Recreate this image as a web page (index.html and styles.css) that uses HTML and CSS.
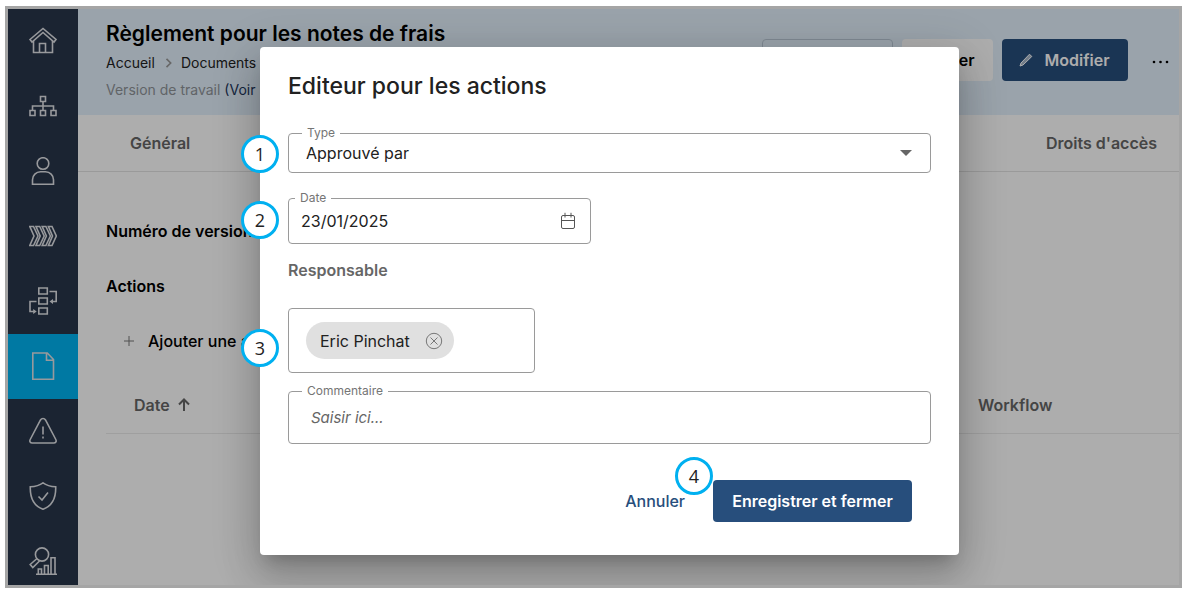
FILE: index.html
```html
<!DOCTYPE html>
<html lang="fr">
<head>
<meta charset="utf-8">
<title>Règlement pour les notes de frais</title>
<link rel="stylesheet" href="styles.css">
</head>
<body>
<div class="app">
  <nav class="sidebar" aria-label="Navigation principale">
    <a class="nav-item" href="#" aria-label="Accueil"><svg viewBox="0 0 28 28"><path d="M1 12.500 14 1.500 27 12.500 25 15 14 5.500 3 15Z"/><path d="M4.500 14v11.500h19V14M10.500 25.500v-9h6v9"/></svg></a>
    <a class="nav-item" href="#" aria-label="Organisation"><svg viewBox="0 0 28 28"><path d="M11.500 4.500h5v5h-5zM1 18.500h5v5H1zM11.500 18.500h5v5h-5zM22 18.500h5v5h-5zM14 9.500v9M3.500 18.500V14h21v4.500"/></svg></a>
    <a class="nav-item" href="#" aria-label="Personnes"><svg viewBox="0 0 28 28"><circle cx="14" cy="6.500" r="5.800"/><path d="M3.500 27.300v-4.500a8 8 0 0 1 8-8h5a8 8 0 0 1 8 8v4.500z"/></svg></a>
    <a class="nav-item" href="#" aria-label="Processus"><svg viewBox="0 0 28 28"><path d="M.8 4.500h3.700L9 14 4.500 23.500H.8L5 14zM7 4.500h3.700L15.200 14l-4.500 9.500H7L11.200 14zM13.200 4.500h3.700L21.400 14l-4.500 9.500h-3.700L17.400 14zM19.400 4.500H23L27.300 14 23 23.500h-3.600L23.500 14z"/></svg></a>
    <a class="nav-item" href="#" aria-label="Flux"><svg viewBox="0 0 28 28"><path d="M9.800 1h8.500v6H9.800zM9.800 11h8.500v6H9.800zM9.800 21h8.500v6H9.800zM20.500 4.500h6.700v10h-4.500M7.500 14.500H1v10h4.500"/><path d="m20.500 14.500 3.500-2.500v5zM7.700 24.500 4.200 22v5z" class="solid"/></svg></a>
    <a class="nav-item active" href="#" aria-label="Documents" aria-current="page"><svg viewBox="0 0 28 28"><path d="M3.800 1h14.500l6.200 6.500V27.200H3.800zM17.500 1v7.200h7"/></svg></a>
    <a class="nav-item" href="#" aria-label="Risques"><svg viewBox="0 0 28 28"><path d="M11.500 3a2.900 2.900 0 0 1 5 0l10.300 19.500c1 2-.2 3.500-2 3.500H3.200c-1.800 0-3-1.500-2-3.500zM14 9.500v8"/><path d="M14 19.500v2"/></svg></a>
    <a class="nav-item" href="#" aria-label="Contrôles"><svg viewBox="0 0 28 28"><path d="M14 .8c3 2.200 8 3.700 12.700 4C27 14.500 24 23.500 14 27.200 4 23.500 1 14.500 1.300 4.800 6 4.500 11 3 14 .8z"/><path d="m9.500 14.500 3.500 3.500 6-7.500"/></svg></a>
    <a class="nav-item" href="#" aria-label="Analyses"><svg viewBox="0 0 28 28"><circle cx="13" cy="7.500" r="6.600"/><path d="m8 11.500-6.800 6 2.600 3L10.500 14M7 27.200h21M9.300 27v-5h3.200v5M15.500 27v-8.500h3.700V27M22 27V10.700h4V27"/></svg></a>
  </nav>

  <main class="main">
    <header class="page-header">
      <div class="heading">
        <h1 class="page-title">Règlement pour les notes de frais</h1>
        <div class="crumbs">
          <a href="#">Accueil</a>
          <svg class="chevron" viewBox="0 0 8 12"><path d="m1 1 5 5-5 5"/></svg>
          <a href="#">Documents</a>
        </div>
        <div class="version">Version de travail <a href="#">(Voir</a></div>
      </div>
      <div class="header-actions">
        <button class="btn btn-outline" type="button" aria-label="Exporter"></button>
        <button class="btn btn-light" type="button">Publier</button>
        <button class="btn btn-primary btn-edit" type="button"><svg class="pencil" viewBox="0 0 14 14"><path d="M1 13 2 10 10.500 1.200 12.800 3.500 4 12z"/></svg>Modifier</button>
        <button class="btn-more" type="button" aria-label="Plus d'options"><svg viewBox="0 0 17 4"><circle cx="2" cy="2" r="1.300"/><circle cx="8.500" cy="2" r="1.300"/><circle cx="15" cy="2" r="1.300"/></svg></button>
      </div>
    </header>
    <div class="tabs">
      <a class="tab" href="#">Général</a>
      <a class="tab" href="#">Droits d'accès</a>
    </div>
    <section class="content">
      <h2 class="section-title">Numéro de version</h2>
      <h2 class="section-title">Actions</h2>
      <button class="add-action" type="button"><svg viewBox="0 0 10 10"><path d="M5 0v10M0 5h10"/></svg>Ajouter une action</button>
      <table class="actions-table">
        <thead>
          <tr>
            <th class="col-date">Date <svg viewBox="0 0 12 13"><path d="M6 13V1.500M1 6.500l5-5 5 5"/></svg></th>
            <th class="col-workflow">Workflow</th>
          </tr>
        </thead>
      </table>
    </section>
  </main>

  <div class="overlay">
    <form class="dialog" role="dialog" aria-labelledby="dialog-title">
      <h2 class="dialog-title" id="dialog-title">Editeur pour les actions</h2>

      <div class="field field-type">
        <label class="float-label" for="type">Type</label>
        <select id="type"><option>Approuvé par</option></select>
        <svg class="caret" viewBox="0 0 12 6"><path d="M0 0h12L6 6z"/></svg>
        <span class="badge">1</span>
      </div>

      <div class="field field-date">
        <label class="float-label" for="date">Date</label>
        <input id="date" type="text" value="23/01/2025">
        <svg class="calendar" viewBox="0 0 16 18"><path d="M3 3.500h10a1.500 1.500 0 0 1 1.500 1.500V15a1.500 1.500 0 0 1-1.500 1.500H3A1.500 1.500 0 0 1 1.500 15V5A1.500 1.500 0 0 1 3 3.500zM1.500 8.500h13M5 .8v4.700M11 .8v4.700"/></svg>
        <span class="badge">2</span>
      </div>

      <h3 class="group-label">Responsable</h3>
      <div class="field field-people">
        <span class="chip">Eric Pinchat
          <button class="chip-remove" type="button" aria-label="Retirer Eric Pinchat"><svg viewBox="0 0 18 18"><circle cx="9" cy="9" r="7.700"/><path d="m5.500 5.500 7 7M12.500 5.500l-7 7"/></svg></button>
        </span>
        <span class="badge">3</span>
      </div>

      <div class="field field-comment">
        <label class="float-label" for="comment">Commentaire</label>
        <textarea id="comment" rows="1" placeholder="Saisir ici..."></textarea>
      </div>

      <div class="dialog-actions">
        <button class="btn-text" type="button">Annuler</button>
        <div class="save">
          <button class="btn btn-primary btn-save" type="submit">Enregistrer et fermer</button>
          <span class="badge badge-save">4</span>
        </div>
      </div>
    </form>
  </div>
</div>
</body>
</html>
```
FILE: styles.css
```css
* { box-sizing: border-box; }

html { height: 100%; }

body {
  display: flex;
  height: 100%;
  margin: 0;
  padding: 6px 2px 2px 5px;
  overflow: hidden;
  background: #fff;
  color: #000;
  font-family: Inter, "Liberation Sans", sans-serif;
  font-size: 16px;
}

h1, h2, h3 { margin: 0; }
a { color: inherit; text-decoration: none; }
button, input, select, textarea { font: inherit; color: inherit; }
svg { display: block; flex: none; fill: none; stroke: currentColor; }

.app {
  position: relative;
  display: flex;
  flex: 1;
  min-width: 0;
  overflow: hidden;
  border: 3px solid #a5a5a5;
}

/* Sidebar */
.sidebar {
  flex: none;
  width: 70px;
  background: #28354a;
  color: #e0e2e6;
}
.nav-item {
  display: flex;
  align-items: center;
  justify-content: center;
  height: 65px;
  padding-bottom: 1px;
}
.nav-item.active { background: #00b3f0; }
.nav-item svg { width: 28px; height: 28px; stroke-width: 1.6; }
.nav-item .solid { fill: currentColor; stroke: none; }

/* Page behind the dialog */
.main { flex: 1; min-width: 0; background: #fff; }

.page-header {
  display: flex;
  justify-content: space-between;
  padding: 11px 10px 15px 28px;
  background: #e4f1fc;
}
.heading { display: grid; flex: 1; gap: 7px; }
.page-title { font-size: 21px; line-height: 28px; margin-bottom: -2px; font-weight: 600; }
.crumbs {
  display: flex;
  align-items: center;
  gap: 8px;
  font-size: 14px;
  line-height: 20px;
  color: #222;
}
.chevron { width: 8px; height: 10px; margin-left: 2px; color: #999; stroke-width: 2; }
.version { font-size: 14px; line-height: 20px; color: #8f9499; }
.version a { color: #1c375c; }

.header-actions { display: flex; align-items: flex-start; gap: 9px; padding-top: 19px; }
.btn {
  display: flex;
  align-items: center;
  justify-content: center;
  height: 42px;
  padding: 0 18px;
  border: 0;
  border-radius: 4px;
  font-weight: 600;
}
.btn-outline { width: 131px; border: 1px solid #bccbd9; background: transparent; }
.btn-light { width: 91px; background: #fff; }
.btn-primary { background: #274e7c; color: #fff; }
.btn-edit { gap: 12px; width: 126px; padding: 0 18px 0 16px; }
.pencil { width: 14px; height: 14px; fill: currentColor; fill-opacity: .6; stroke-width: 1; }
.btn-more { height: 42px; padding: 4px 0 0; margin-left: 15px; border: 0; background: none; }
.btn-more svg { width: 17px; height: 4px; fill: currentColor; stroke: none; }

.tabs {
  display: flex;
  align-items: center;
  justify-content: space-between;
  height: 57px;
  padding: 0 22px 0 52px;
  border-bottom: 1px solid #e4e4e4;
  font-weight: 600;
  color: #666;
}

.content { padding: 47px 0 0 28px; }
.section-title { margin-bottom: 31px; font-size: 16px; line-height: 24px; font-weight: 600; }
.add-action {
  display: flex;
  align-items: center;
  gap: 14px;
  padding: 0 18px;
  border: 0;
  background: none;
  line-height: 24px;
  font-weight: 500;
}
.add-action svg { width: 10px; height: 10px; color: #777; }

.actions-table {
  width: 100%;
  margin-top: 24px;
  border-collapse: collapse;
  border-bottom: 1px solid #eaeaea;
  color: #666;
}
.actions-table th { height: 56px; padding: 0 0 0 28px; text-align: left; font-weight: 600; }
.actions-table svg { display: inline-block; width: 12px; height: 13px; margin-left: 4px; stroke-width: 2; }
.col-workflow { width: 229px; }

/* Dialog */
.overlay {
  position: absolute;
  inset: 0;
  display: flex;
  align-items: flex-start;
  justify-content: center;
  padding: 38px 0 0 32px;
  background: rgba(0, 0, 0, .32);
}
.dialog {
  display: flex;
  flex-direction: column;
  align-items: flex-start;
  width: 699px;
  max-width: 100%;
  padding: 24px 28px 33px;
  border-radius: 4px;
  background: #fff;
  color: #212121;
  box-shadow: 0 11px 15px -7px rgba(0, 0, 0, .2), 0 24px 38px 3px rgba(0, 0, 0, .14), 0 9px 46px 8px rgba(0, 0, 0, .12);
}
.dialog-title { margin-bottom: 32px; font-size: 23px; line-height: 30px; font-weight: 500; }

.field {
  position: relative;
  display: flex;
  align-items: center;
  border: 1px solid #9a9a9a;
  border-radius: 4px;
}
.float-label {
  position: absolute;
  top: -9px;
  left: 13px;
  padding: 0 5px;
  background: #fff;
  color: #757575;
  font-size: 12px;
  line-height: 16px;
}
.field input, .field select, .field textarea {
  flex: 1;
  min-width: 0;
  border: 0;
  outline: 0;
  background: none;
  appearance: none;
  resize: none;
}
.field-type { align-self: stretch; height: 40px; margin-bottom: 25px; }
.field-type select { padding: 0 18px 0 17px; }
.field-type .caret { width: 12px; height: 6px; margin-right: 18px; fill: #666; stroke: none; }

.field-date { width: 303px; height: 46px; margin-bottom: 14px; }
.field-date .float-label { left: 6px; }
.field-date input { padding: 0 12px; }
.field-date .calendar { width: 16px; height: 18px; margin-right: 14px; color: #555; }

.group-label { margin-bottom: 26px; font-size: 16px; line-height: 24px; font-weight: 600; color: #666; }
.field-people { width: 247px; height: 65px; margin-bottom: 18px; padding-left: 17px; }
.chip {
  display: flex;
  align-items: center;
  gap: 15px;
  height: 37px;
  padding: 0 11px 0 14px;
  border-radius: 19px;
  background: #e0e0e0;
}
.chip-remove { padding: 0; border: 0; background: none; color: #777; }
.chip-remove svg { width: 18px; height: 18px; }

.field-comment { align-self: stretch; height: 53px; margin-bottom: 36px; }
.field-comment textarea { height: 24px; padding: 0 22px; line-height: 24px; }
.field-comment textarea::placeholder { color: #666; font-style: italic; font-size: 15px; opacity: 1; }

.dialog-actions { display: flex; align-self: flex-end; align-items: center; gap: 28px; padding-right: 19px; }
.btn-text { padding: 0; border: 0; background: none; color: #274e7c; font-weight: 500; }
.save { position: relative; }
.btn-save { width: 199px; }

/* Numbered markers */
.badge {
  position: absolute;
  top: 50%;
  left: -48px;
  display: flex;
  align-items: center;
  justify-content: center;
  width: 38px;
  height: 38px;
  margin-top: -18px;
  border: 3px solid #00b0f0;
  border-radius: 50%;
  background: #fff;
  color: #222;
  font-family: "Open Sans", "Noto Sans", sans-serif;
  font-size: 18px;
  font-weight: 400;
  line-height: 1;
}
.field-date .badge { margin-top: -20px; }
.field-people .badge { margin-top: -12px; }
.badge-save { top: -5px; left: -38px; }
```
